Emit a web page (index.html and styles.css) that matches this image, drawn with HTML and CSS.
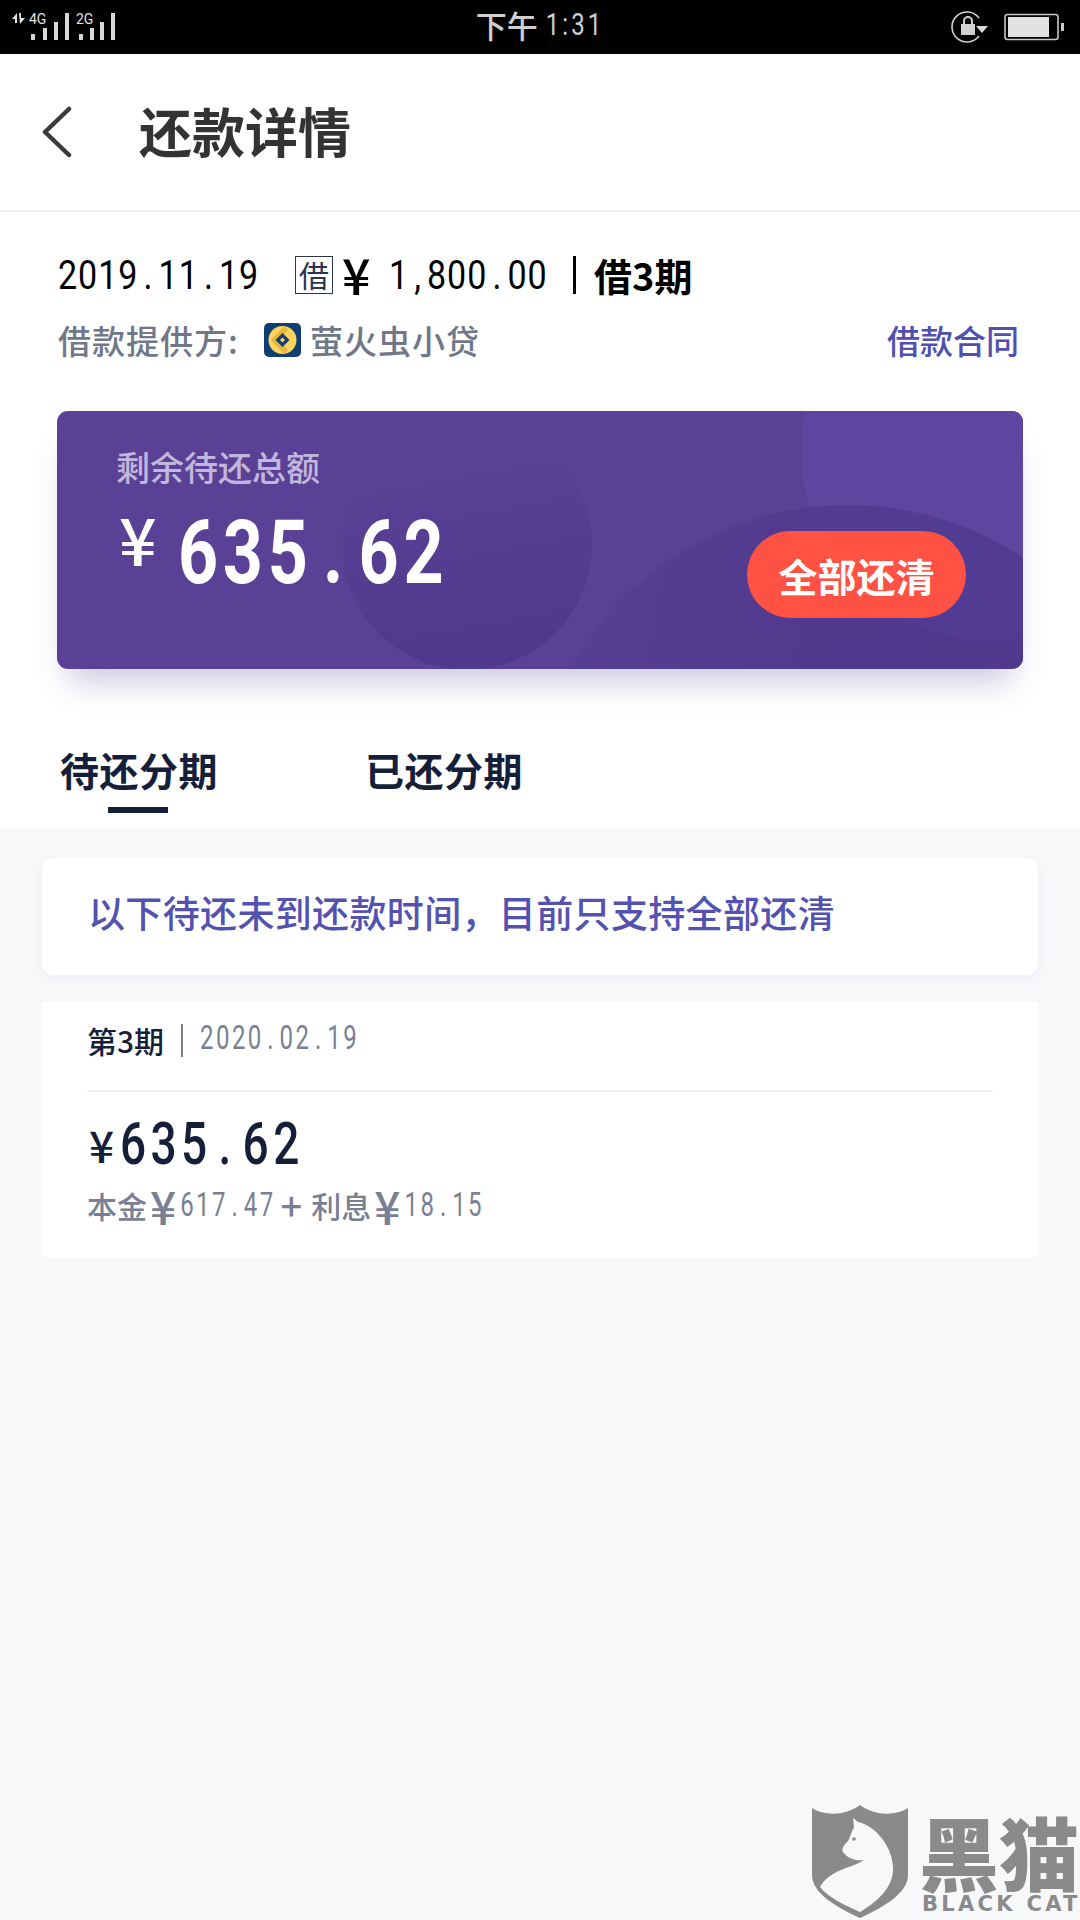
FILE: index.html
```html
<!DOCTYPE html>
<html lang="zh-CN">
<head>
<meta charset="utf-8">
<title>还款详情</title>
<link rel="stylesheet" href="styles.css">
</head>
<body>
<div class="page">
  <header class="status">
    <svg class="status-signal" width="130" height="54" viewBox="0 0 130 54">
      <path d="M12 19 L17 13 V23 H15 V19 Z M19 13 H21 V18 H25 L20 24 Z" fill="#e4e4e4"/>
      <text x="29" y="24" class="status-net">4G</text>
      <text x="76" y="24" class="status-net">2G</text>
      <g fill="#d8d8d8">
        <rect x="31" y="34" width="4" height="6"/><rect x="43" y="28" width="4" height="12"/><rect x="54" y="22" width="4" height="18"/><rect x="65" y="13" width="4" height="27"/>
        <rect x="79" y="34" width="4" height="6"/><rect x="90" y="28" width="4" height="12"/><rect x="100" y="22" width="4" height="18"/><rect x="111" y="13" width="4" height="27"/>
      </g>
    </svg>
    <div class="status-time">下午<span class="status-digits">1:31</span></div>
    <svg class="status-right" width="130" height="54" viewBox="950 0 130 54">
      <path d="M979 18 A15 15 0 1 0 979 36" fill="none" stroke="#cfcfcf" stroke-width="1.600"/>
      <path d="M976 26 H988 L982 33 Z" fill="#d8d8d8"/>
      <rect x="961" y="24" width="14" height="11" fill="#d0d0d0"/>
      <path d="M964 24 V21 A4 4 0 0 1 972 21 V24" fill="none" stroke="#d0d0d0" stroke-width="2"/>
      <rect x="1005" y="14.500" width="53" height="25" rx="2.500" fill="none" stroke="#c8c8c8" stroke-width="1.600"/>
      <rect x="1008" y="17" width="41" height="20" fill="#e2e2e2"/>
      <rect x="1061" y="23" width="3" height="8" fill="#c8c8c8"/>
    </svg>
  </header>

  <nav class="nav">
    <svg class="nav-back" width="30" height="52" viewBox="0 0 30 52">
      <path d="M27 3 L3 26 L27 49" fill="none" stroke="#3a3a3a" stroke-width="4.500" stroke-linecap="round" stroke-linejoin="round"/>
    </svg>
    <h1 class="nav-title">还款详情</h1>
  </nav>

  <section class="summary">
    <div class="loan-line">
      <span class="num loan-date">2019<span class="dot">.</span>11<span class="dot">.</span>19</span>
      <span class="loan-tag">借</span>
      <span class="loan-yen">¥</span>
      <span class="num loan-amount">1<span class="dot">,</span>800<span class="dot">.</span>00</span>
      <span class="loan-sep"></span>
      <span class="loan-term">借3期</span>
    </div>
    <div class="provider-line">
      <div class="provider">
        <span class="provider-label">借款提供方:</span>
        <svg class="provider-logo" width="37" height="34" viewBox="0 0 37 34">
          <rect width="37" height="34" rx="5" fill="#0f3e72"/>
          <circle cx="18.500" cy="17" r="14" fill="#fbd45e"/>
          <path d="M20 3 L7 17 L20 31 L24 27 L15 17 L24 7 Z" fill="#e7b63f"/>
          <path d="M18.500 10 L25.500 17 L18.500 24 L11.500 17 Z" fill="#0f3e72"/>
          <path d="M18.500 14.500 L21 17 L18.500 19.500 L16 17 Z" fill="#fbd45e"/>
        </svg>
        <span class="provider-name">萤火虫小贷</span>
      </div>
      <span class="contract">借款合同</span>
    </div>

    <div class="balance-card">
      <div class="deco-layer">
        <span class="deco deco-circle"></span>
        <span class="deco deco-hump"></span>
        <span class="deco deco-glow"></span>
      </div>
      <div class="balance-body">
        <div class="balance-label">剩余待还总额</div>
        <div class="balance-amount"><span class="balance-yen">¥</span><span class="num balance-value">635<span class="dot">.</span>62</span></div>
      </div>
      <button class="payoff">全部还清</button>
    </div>

    <div class="tabs">
      <div class="tab tab-active">待还分期</div>
      <div class="tab">已还分期</div>
    </div>
  </section>

  <main class="content">
    <div class="notice">以下待还未到还款时间，目前只支持全部还清</div>
    <article class="installment">
      <div class="inst-head">
        <span class="inst-term">第3期</span>
        <span class="inst-sep"></span>
        <span class="num inst-date">2020<span class="dot">.</span>02<span class="dot">.</span>19</span>
      </div>
      <div class="inst-amount"><span class="inst-yen">¥</span><span class="num inst-value">635<span class="dot">.</span>62</span></div>
      <div class="inst-detail">本金<span class="yen-small">¥</span><span class="num inst-part">617<span class="dot">.</span>47</span><span class="inst-plus">+</span>利息<span class="yen-small">¥</span><span class="num inst-part">18<span class="dot">.</span>15</span></div>
    </article>
  </main>

  <aside class="watermark">
    <svg class="wm-shield" width="96" height="113" viewBox="0 0 96 113">
      <path d="M0 3 C12 11 34 11 48 0 C62 11 84 11 96 3 V70 C96 88 72 102 48 113 C24 102 0 88 0 70 Z" fill="#8a8a8a"/>
      <path d="M41 13 L46 17 C62 20 80 40 81 62 C82 82 66 96 48 107 C32 100 16 92 8 82 C12 74 22 67 34 63 C42 60 48 58 52 55 C44 56 36 54 31 47 C29 44 32 40 36 36 C38 32 40 26 42 22 Z" fill="#f7f8fa"/>
      <circle cx="42" cy="34" r="1.800" fill="#8a8a8a"/>
    </svg>
    <div class="wm-text">
      <div class="wm-cn">黑猫</div>
      <div class="wm-en">BLACK CAT</div>
    </div>
  </aside>
</div>
</body>
</html>
```
FILE: styles.css
```css
* { box-sizing: border-box; }
html, body { margin: 0; padding: 0; }
body {
  width: 1080px;
  height: 1920px;
  overflow: hidden;
  background: #f7f8fa;
  font-family: "Noto Sans CJK SC", "Noto Sans", sans-serif;
}
.page { position: relative; width: 1080px; height: 1920px; }

/* condensed digits: a regular face stretched upward, with even cells */
.num {
  display: inline-block;
  font-family: "Roboto", "Liberation Sans", sans-serif;
  white-space: nowrap;
}
.dot { margin: 0 .15em; }

/* status bar */
.status {
  height: 54px;
  background: #000;
  display: grid;
  grid-template-columns: 1fr auto 1fr;
  align-items: center;
}
.status-signal { display: block; }
.status-net { font: 400 14px "Roboto", sans-serif; fill: #e0e0e0; }
.status-time {
  color: #cfcfcf;
  font-size: 31px;
  font-weight: 500;
  line-height: 50px;
  height: 54px;
  display: flex;
  align-items: flex-start;
  gap: 8px;
}
.status-digits {
  font-family: "Roboto", sans-serif;
  font-weight: 400;
  font-size: 24px;
  letter-spacing: 3px;
  display: inline-block;
  transform: scaleY(1.3);
}
.status-right { justify-self: end; display: block; }

/* nav */
.nav {
  height: 158px;
  background: #fff;
  border-bottom: 2px solid #f0f0f2;
  padding: 0 0 4px 42px;
  display: flex;
  align-items: center;
  gap: 67px;
}
.nav-back { display: block; margin-top: 4px; }
.nav-title {
  margin: 0;
  font-size: 53px;
  font-weight: 700;
  color: #333;
  line-height: 1;
}

/* summary */
.summary { background: #fff; height: 616px; padding: 40px 57px 0; }
.loan-line {
  height: 46px;
  display: flex;
  align-items: center;
  padding-left: 1px;
  color: #000;
}
.loan-date, .loan-amount {
  font-size: 34px;
  font-weight: 400;
  letter-spacing: 1px;
  transform: scaleY(1.18);
}
.loan-date { width: 237px; }
.loan-tag {
  width: 38px;
  height: 38px;
  border: 1.500px solid #2a3350;
  color: #2a3350;
  font-size: 30px;
  line-height: 34px;
  text-align: center;
  margin-right: 9px;
}
.loan-yen { font-size: 50px; font-weight: 500; width: 47px; line-height: 1; margin-top: -5px; }
.loan-amount { width: 184px; }
.loan-sep { width: 3px; height: 38px; background: #000; margin-right: 18px; }
.loan-term { font-size: 38px; font-weight: 700; line-height: 1; }

.provider-line {
  margin-top: 22px;
  height: 40px;
  padding: 0 4px 0 1px;
  display: flex;
  align-items: center;
  justify-content: space-between;
  font-size: 33px;
  font-weight: 500;
}
.provider { display: flex; align-items: center; color: #6f7789; letter-spacing: 1px; }
.provider-label { width: 206px; }
.provider-logo { display: block; margin-right: 9px; }
.contract { color: #5250ae; }

.balance-card {
  position: relative;
  margin-top: 51px;
  height: 258px;
  border-radius: 11px;
  background: #5a4196;
  box-shadow: 0 24px 30px -12px rgba(90, 65, 150, .3);
  display: flex;
  justify-content: space-between;
  align-items: flex-start;
  padding: 36px 57px 0 59px;
}
.deco-layer {
  position: absolute;
  inset: 0;
  overflow: hidden;
  border-radius: 11px;
}
.deco { position: absolute; border-radius: 50%; display: block; }
.deco-circle {
  left: 744px; top: -151px;
  width: 380px; height: 380px;
  background: #5e45a0;
}
.deco-hump {
  left: 472px; top: 94px;
  width: 638px; height: 638px;
  background: linear-gradient(100deg, rgba(72, 50, 134, .08), rgba(72, 50, 134, .5) 40%, rgba(72, 50, 134, .55));
}
.deco-glow {
  left: 285px; top: 9px;
  width: 250px; height: 250px;
  background: linear-gradient(170deg, rgba(72, 50, 134, 0) 20%, rgba(72, 50, 134, .55) 85%);
}
.balance-body { position: relative; }
.balance-label { font-size: 34px; font-weight: 500; color: #c1b7dd; line-height: 40px; }
.balance-amount { display: flex; align-items: flex-start; margin-top: 25px; color: #fff; }
.balance-yen { font-size: 66px; font-weight: 500; line-height: 50px; width: 62px; padding-left: 3px; }
.balance-value {
  font-size: 70px;
  font-weight: 700;
  line-height: 80px;
  letter-spacing: 4.700px;
  transform: scaleY(1.28);
}
.payoff {
  position: relative;
  margin-top: 84px;
  width: 219px;
  height: 87px;
  border: 0;
  border-radius: 44px;
  background: #ff5245;
  color: #fff;
  font: 700 39px "Noto Sans CJK SC", sans-serif;
  padding: 0;
}

.tabs {
  margin-top: 75px;
  display: flex;
  gap: 147px;
  padding-left: 3px;
}
.tab {
  position: relative;
  font-size: 39px;
  font-weight: 700;
  letter-spacing: .5px;
  color: #161f3a;
  line-height: 50px;
}
.tab-active::after {
  content: "";
  position: absolute;
  left: 48px;
  top: 63px;
  width: 60px;
  height: 6px;
  background: #161f3a;
}

/* content */
.content { padding: 30px 42px 0; }
.notice {
  height: 117px;
  background: #fff;
  border-radius: 11px;
  box-shadow: 0 3px 10px rgba(120, 120, 160, .08);
  padding-left: 46px;
  font-size: 37px;
  font-weight: 500;
  letter-spacing: .35px;
  line-height: 108px;
  color: #5452b0;
}
.installment {
  margin-top: 27px;
  height: 255px;
  background: #fff;
  padding: 20px 45px 0;
}
.inst-head {
  height: 70px;
  border-bottom: 2px solid #efeff2;
  display: flex;
  align-items: flex-start;
}
.inst-term { font-size: 30px; font-weight: 500; color: #161f3a; line-height: 36px; }
.inst-sep { width: 2px; height: 33px; background: #7a8094; margin: 2px 17px 0 17px; }
.inst-date {
  font-size: 24px;
  letter-spacing: 2.400px;
  color: #7a8094;
  line-height: 32px;
  transform: scaleY(1.35);
}
.inst-amount { display: flex; align-items: center; margin-top: 27px; height: 50px; color: #161f3a; }
.inst-yen { font-size: 44px; font-weight: 500; width: 33px; padding-left: 2px; }
.inst-value {
  font-size: 46px;
  font-weight: 500;
  letter-spacing: 4.400px;
  transform: scaleY(1.28);
}
.inst-detail {
  margin-top: 17px;
  display: flex;
  align-items: center;
  font-size: 30px;
  font-weight: 500;
  color: #7a8094;
  line-height: 38px;
}
.yen-small { font-size: 46px; margin-left: 3px; }
.inst-part {
  font-size: 24px;
  letter-spacing: 2.400px;
  font-weight: 400;
  margin-left: 4px;
  transform: scaleY(1.35);
}
.inst-plus { font-size: 38px; margin: 0 9px 0 5px; }

/* watermark */
.watermark {
  position: absolute;
  left: 812px;
  top: 1805px;
  display: flex;
  gap: 11px;
  color: #8a8a8a;
}
.wm-shield { display: block; }
.wm-text { margin-top: 6px; }
.wm-cn { font-size: 80px; font-weight: 900; line-height: 78px; }
.wm-en {
  font: 700 21px "DejaVu Sans", sans-serif;
  letter-spacing: 3.300px;
  margin: 5px 0 0 3px;
  line-height: 20px;
  white-space: nowrap;
}
```
